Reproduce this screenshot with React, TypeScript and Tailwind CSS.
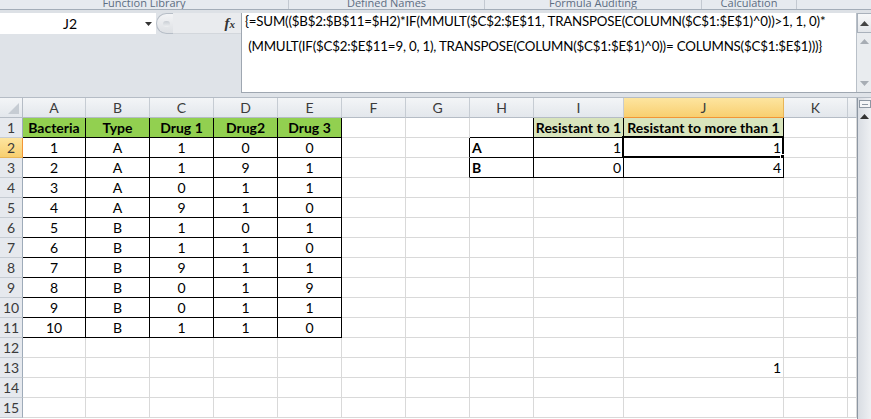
import React from "react";

const FONT = { fontFamily: "Lato, 'Noto Sans', sans-serif" };

type Cell = { t?: string; align?: "l" | "c" | "r"; bold?: boolean };

const COLS = ["A", "B", "C", "D", "E", "F", "G", "H", "I", "J", "K", ""];

const data: Record<string, Cell> = {};
const set = (r: number, c: number, t: string, align: "l" | "c" | "r", bold = false) => {
  data[`${r}-${c}`] = { t, align, bold };
};
["Bacteria", "Type", "Drug 1", "Drug2", "Drug 3"].forEach((t, i) => set(1, i, t, "c", true));
set(1, 8, "Resistant to 1", "c", true);
set(1, 9, "Resistant to more than 1", "c", true);
const rows: string[][] = [
  ["1", "A", "1", "0", "0"],
  ["2", "A", "1", "9", "1"],
  ["3", "A", "0", "1", "1"],
  ["4", "A", "9", "1", "0"],
  ["5", "B", "1", "0", "1"],
  ["6", "B", "1", "1", "0"],
  ["7", "B", "9", "1", "1"],
  ["8", "B", "0", "1", "9"],
  ["9", "B", "0", "1", "1"],
  ["10", "B", "1", "1", "0"],
];
rows.forEach((row, i) => row.forEach((t, c) => set(i + 2, c, t, "c")));
set(2, 7, "A", "l", true);
set(3, 7, "B", "l", true);
set(2, 8, "1", "r");
set(3, 8, "0", "r");
set(2, 9, "1", "r");
set(3, 9, "4", "r");
set(13, 9, "1", "r");

function rightBlack(r: number, c: number) {
  if (r >= 1 && r <= 11 && c <= 4) return true;
  if (r >= 2 && r <= 3 && c >= 6 && c <= 9) return true;
  if (r === 1 && c >= 7 && c <= 9) return true;
  return false;
}
function bottomBlack(r: number, c: number) {
  if (r >= 1 && r <= 11 && c <= 4) return true;
  if (r >= 1 && r <= 3 && c >= 7 && c <= 9) return true;
  return false;
}
function bg(r: number, c: number) {
  if (r === 1 && c <= 4) return "bg-[#92d050]";
  if (r === 1 && (c === 8 || c === 9)) return "bg-[#d8e4bc]";
  return "bg-white";
}

function UpTri({ color }: { color: string }) {
  return (
    <svg width="9" height="5" viewBox="0 0 9 5">
      <path d="M0 5 L4.5 0 L9 5 Z" fill={color} />
    </svg>
  );
}
function DownTri({ color }: { color: string }) {
  return (
    <svg width="9" height="5" viewBox="0 0 9 5">
      <path d="M0 0 L4.5 5 L9 0 Z" fill={color} />
    </svg>
  );
}

export default function App() {
  const groups = [
    { w: "w-[289px]", label: "Function Library" },
    { w: "w-[196px]", label: "Defined Names" },
    { w: "w-[217px]", label: "Formula Auditing" },
    { w: "w-[95px]", label: "Calculation" },
  ];
  return (
    <div className="w-[871px] h-[419px] overflow-hidden bg-white flex flex-col" style={FONT}>
      {/* Ribbon group labels */}
      <div className="h-[9px] flex bg-[#e6eaef] overflow-hidden shrink-0">
        {groups.map((g) => (
          <div
            key={g.label}
            className={`${g.w} shrink-0 h-[9px] flex items-end justify-center border-r border-r-[#c3c9d1] overflow-hidden`}
          >
            <span
              className="text-[11px] leading-[13px] text-[#5d6d82] whitespace-nowrap"
              style={{ fontFamily: "'Open Sans', 'Noto Sans', sans-serif" }}
            >
              {g.label}
            </span>
          </div>
        ))}
        <div className="flex-1" />
      </div>
      <div className="h-px bg-[#a3adb8] shrink-0" />
      <div className="h-[3px] bg-[#dde1e6] shrink-0" />

      {/* Formula bar */}
      <div className="h-[80px] flex shrink-0 bg-[#dfe3e8]">
        <div className="w-[241px] shrink-0 flex flex-col">
          <div className="h-[21px] flex items-stretch">
            <div className="w-[156px] shrink-0 bg-white flex items-center">
              <div className="flex-1 text-center text-[14px] text-black leading-none">J2</div>
              <div className="w-[16px] flex items-center justify-center">
                <svg width="7" height="4" viewBox="0 0 7 4">
                  <path d="M0 0 L7 0 L3.5 4 Z" fill="#333" />
                </svg>
              </div>
            </div>
            <div className="w-[17px] shrink-0 h-[21px] rounded-l-full border border-[#b7bec7] border-r-0 bg-gradient-to-b from-[#f3f4f6] to-[#dde0e4] flex items-center justify-center">
              <div className="w-[7px] h-[6px] rounded-full bg-gradient-to-b from-[#c9ced4] to-[#eef0f2] ml-[2px]" />
            </div>
            <div className="flex-1 bg-[#e9ebee] flex items-center justify-end pr-[6px] border-b border-b-[#d3d7dc]">
              <span
                className="text-[15px] italic font-bold text-[#333] leading-none"
                style={{ fontFamily: "'Liberation Serif', serif" }}
              >
                f<span className="text-[11px]">x</span>
              </span>
            </div>
          </div>
          <div className="flex-1" />
        </div>
        <div className="flex-1 min-w-0 bg-white border-l border-l-[#9fa7b1] border-b border-b-[#9fa7b1] flex overflow-hidden">
          <div className="flex-1 min-w-0 overflow-hidden pl-[3px] -mt-[4px] text-[13.3px] tracking-[-0.2px] leading-[25px] text-black whitespace-pre">
            <div>{"{=SUM(($B$2:$B$11=$H2)*IF(MMULT($C$2:$E$11, TRANSPOSE(COLUMN($C$1:$E$1)^0))>1, 1, 0)*"}</div>
            <div>{" (MMULT(IF($C$2:$E$11=9, 0, 1), TRANSPOSE(COLUMN($C$1:$E$1)^0))= COLUMNS($C$1:$E$1)))}"}</div>
          </div>
          <div className="w-[15px] shrink-0 bg-[#e9ecef] border-l border-l-[#b9c0c8] flex flex-col items-center">
            <div className="w-[15px] h-[20px] border border-[#a9b1bb] bg-gradient-to-b from-[#f7f8f9] to-[#e3e6ea] flex items-center justify-center">
              <UpTri color="#444" />
            </div>
            <div className="mt-[6px]">
              <UpTri color="#a7adb4" />
            </div>
            <div className="flex-1" />
            <div className="mb-[6px]">
              <DownTri color="#a7adb4" />
            </div>
          </div>
        </div>
      </div>
      <div className="h-[5px] bg-[#dfe3e8] border-b border-b-[#b5bcc5] shrink-0" />

      {/* Sheet */}
      <div className="flex-1 flex">
        <div className="w-[857px] shrink-0 grid grid-cols-[23px_63px_64px_64px_64px_64px_64px_64px_64px_90px_160px_64px_9px] auto-rows-[20px] content-start text-[14px] text-black">
          {/* header row */}
          <div className="border-r border-b border-r-[#b5bcc5] border-b-[#b5bcc5] bg-gradient-to-b from-[#f3f5f7] to-[#e3e7ec] flex items-end justify-end p-[3px]">
            <svg width="11" height="11" viewBox="0 0 11 11">
              <path d="M11 0 L11 11 L0 11 Z" fill="#c6ccd3" />
            </svg>
          </div>
          {COLS.map((c, i) =>
            c === "J" ? (
              <div
                key={i}
                className="border-r border-b border-r-[#e8b557] border-b-[#f29536] bg-gradient-to-b from-[#fde59f] to-[#f8cf6f] flex items-center justify-center text-[#3b3b3b]"
              >
                {c}
              </div>
            ) : (
              <div
                key={i}
                className="border-r border-b border-r-[#c6ccd3] border-b-[#b5bcc5] bg-gradient-to-b from-[#f3f5f7] to-[#e3e7ec] flex items-center justify-center text-[#3b3b3b]"
              >
                {c}
              </div>
            )
          )}
          {Array.from({ length: 15 }, (_, ri) => {
            const r = ri + 1;
            return (
              <React.Fragment key={r}>
                {r === 2 ? (
                  <div className="border-r border-b border-r-[#f29536] border-b-[#e8b557] bg-gradient-to-b from-[#fde59f] to-[#f8cf6f] flex items-center justify-center text-[#3b3b3b]">
                    {r}
                  </div>
                ) : (
                  <div className="border-r border-b border-r-[#9eabb9] border-b-[#c6ccd3] bg-[#e6e9ee] flex items-center justify-center text-[#3b3b3b]">
                    {r}
                  </div>
                )}
                {COLS.map((_, c) => {
                  const cell = data[`${r}-${c}`];
                  const rb = rightBlack(r, c) ? "border-r-black" : "border-r-[#d9d9d9]";
                  const bb = bottomBlack(r, c) ? "border-b-black" : "border-b-[#d9d9d9]";
                  const al =
                    cell?.align === "l"
                      ? "justify-start pl-[2px]"
                      : cell?.align === "r"
                      ? "justify-end pr-[2px]"
                      : "justify-center";
                  const sel = r === 2 && c === 9;
                  return (
                    <div
                      key={c}
                      className={`relative border-r border-b ${rb} ${bb} ${bg(r, c)} flex items-center ${al} ${
                        cell?.bold ? "font-bold" : ""
                      } whitespace-nowrap overflow-visible`}
                    >
                      {cell?.t}
                      {sel && (
                        <div className="absolute -left-[2px] -top-[2px] -right-[1px] -bottom-[1px] border-2 border-black pointer-events-none">
                          <div className="absolute inset-0 border border-white" />
                          <div className="absolute -right-[4px] -bottom-[4px] w-[6px] h-[6px] bg-black border border-white" />
                        </div>
                      )}
                    </div>
                  );
                })}
              </React.Fragment>
            );
          })}
        </div>
        {/* vertical scrollbar */}
        <div className="w-[14px] shrink-0 border-l border-l-[#8d97a3] bg-gradient-to-r from-[#d9dde3] to-[#eef0f3] flex flex-col items-center">
          <div className="w-[12px] h-[8px] mt-[2px] border border-[#8d97a3] bg-[#f4f5f7] flex items-center justify-center">
            <div className="w-[6px] h-px bg-[#8d97a3]" />
          </div>
          <div className="mt-[6px]">
            <UpTri color="#333" />
          </div>
        </div>
      </div>
    </div>
  );
}
